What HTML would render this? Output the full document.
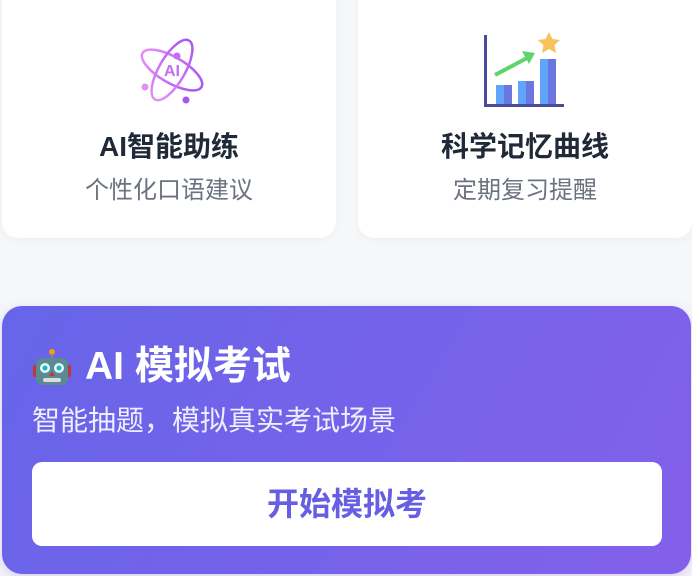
<!DOCTYPE html>
<html><head><meta charset="utf-8"><style>
*{margin:0;padding:0;box-sizing:border-box}
body{width:692px;height:576px;background:#f6f7f9;position:relative;overflow:hidden;font-family:"Liberation Sans","Noto Sans CJK SC",sans-serif}
.card{position:absolute;top:-20px;height:258px;background:#fff;border-radius:16px;box-shadow:0 2px 8px rgba(0,0,0,0.04);text-align:center}
.t{position:absolute;left:0;right:0;top:153px;line-height:28px;font-size:28px;font-weight:bold;color:#1f2937}
.s{position:absolute;left:0;right:0;top:199px;line-height:24px;font-size:24px;color:#6b7280}
.ban{position:absolute;left:2px;top:306px;width:689px;height:268px;border-radius:20px;background:linear-gradient(120deg,#6665e9,#8460ea);box-shadow:0 4px 12px rgba(120,90,230,0.25)}
.bt{position:absolute;left:30px;top:40px;height:42px;font-size:39px;font-weight:bold;color:#fff;display:flex;align-items:center;line-height:42px}
.bs{position:absolute;left:30px;top:101px;font-size:28px;line-height:28px;color:#eef}
.btn{position:absolute;left:30px;top:156px;width:630px;height:84px;background:#fff;border-radius:10px;text-align:center;line-height:84px;font-size:32px;font-weight:bold;color:#675fe2}
</style></head><body>
<div class="card" style="left:2px;width:334px">
<svg style="position:absolute;left:134px;top:52px" width="72" height="76" viewBox="0 0 72 76">
<defs><linearGradient id="g" x1="0" x2="1"><stop offset="0" stop-color="#e48ef5"/><stop offset="1" stop-color="#a855f7"/></linearGradient></defs>
<g fill="none" stroke="url(#g)" stroke-width="2.5">
<ellipse cx="36" cy="38" rx="34" ry="13" transform="rotate(30 36 38)"/>
<ellipse cx="36" cy="38" rx="34" ry="13" transform="rotate(-60 36 38)"/>
</g>
<text x="36" y="44" text-anchor="middle" font-size="16" font-weight="bold" fill="#c46cf0" font-family="Liberation Sans">AI</text>
<circle cx="41" cy="24" r="3.5" fill="#c06ff3"/><circle cx="9" cy="55" r="3.5" fill="#e48ef5"/><circle cx="50" cy="68" r="3.5" fill="#a855f7"/>
</svg>
<div class="t">AI智能助练</div><div class="s">个性化口语建议</div>
</div>
<div class="card" style="left:358px;width:334px">
<svg style="position:absolute;left:124px;top:52px" width="84" height="80" viewBox="0 0 84 80">
<rect x="2" y="3" width="3" height="72" fill="#4c4a9a"/><rect x="2" y="72" width="80" height="3" fill="#4c4a9a"/>
<rect x="14" y="53" width="16" height="19" fill="#60a5fa"/><rect x="22" y="53" width="8" height="19" fill="#6b76e0"/>
<rect x="36" y="49" width="16" height="23" fill="#60a5fa"/><rect x="44" y="49" width="8" height="23" fill="#6b76e0"/>
<rect x="58" y="27" width="16" height="45" fill="#60a5fa"/><rect x="66" y="27" width="8" height="45" fill="#6b76e0"/>
<path d="M13 43 L45 26" stroke="#5fd46c" stroke-width="4"/><path d="M40 19 L53 21 L47 32Z" fill="#5fd46c"/>
<path d="M67 0 L70.5 7 L78 8 L72.5 13 L74 21 L67 17 L60 21 L61.5 13 L56 8 L63.5 7Z" fill="#f7c15c"/>
</svg>
<div class="t">科学记忆曲线</div><div class="s">定期复习提醒</div>
</div>
<div class="ban">
<div class="bt"><svg width="40" height="40" viewBox="0 0 40 40" style="margin-right:13px">
<circle cx="20" cy="5" r="3" fill="#f59e0b"/><rect x="19" y="7" width="2" height="5" fill="#888"/>
<rect x="1" y="18" width="5" height="12" rx="2" fill="#c0392b"/><rect x="34" y="18" width="5" height="12" rx="2" fill="#c0392b"/>
<rect x="4" y="11" width="32" height="27" rx="6" fill="#5b8a95"/>
<circle cx="13" cy="21" r="5" fill="#dff"/><circle cx="27" cy="21" r="5" fill="#dff"/>
<circle cx="13" cy="21" r="2.5" fill="#3ab"/><circle cx="27" cy="21" r="2.5" fill="#3ab"/>
<path d="M20 24 L17 29 L23 29Z" fill="#c0392b"/><rect x="11" y="31" width="18" height="4" rx="2" fill="#ddd"/>
</svg>AI 模拟考试</div>
<div class="bs">智能抽题，模拟真实考试场景</div>
<div class="btn">开始模拟考</div>
</div>
</body></html>
